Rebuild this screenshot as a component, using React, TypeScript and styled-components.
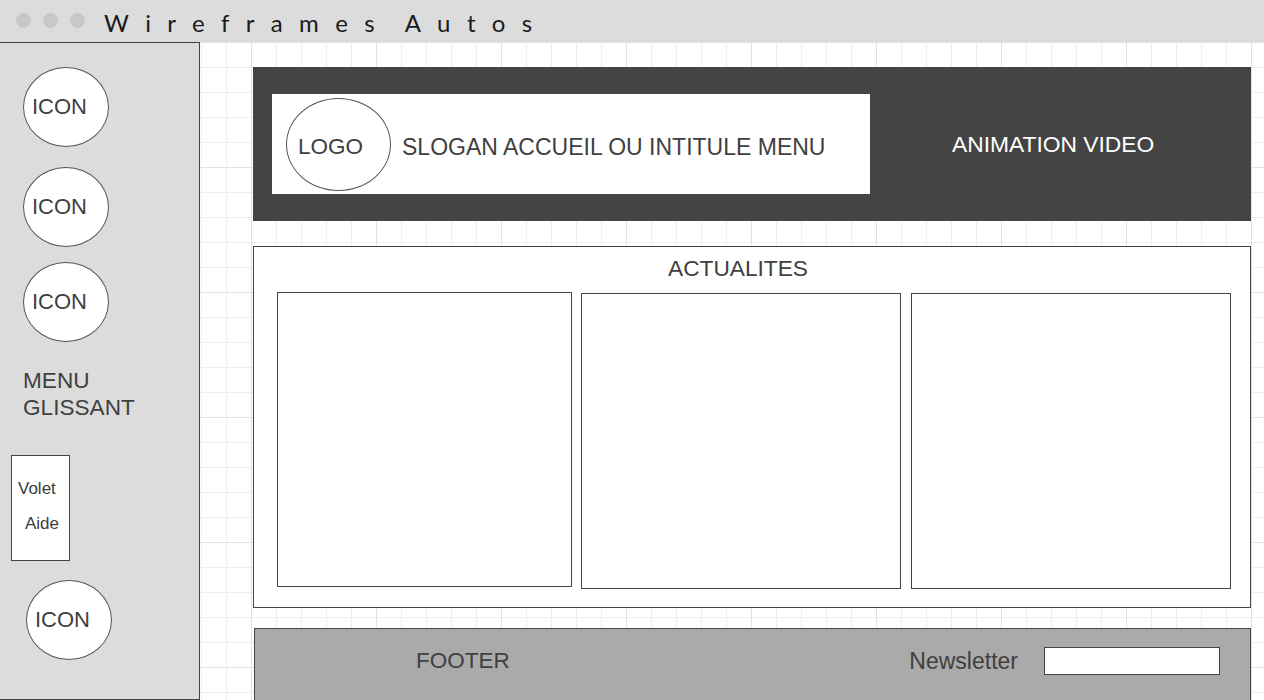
import styled, { createGlobalStyle } from "styled-components";

const GlobalStyle = createGlobalStyle`
  html, body {
    margin: 0;
    padding: 0;
    overflow: hidden;
    background: #ffffff;
  }
  body {
    font-family: "Liberation Sans", Arial, sans-serif;
    color: #404040;
  }
  * {
    box-sizing: border-box;
  }
`;

const Window = styled.div`
  width: 1264px;
  height: 700px;
  display: flex;
  flex-direction: column;
  overflow: hidden;
`;

const TitleBar = styled.div`
  height: 42px;
  flex: none;
  display: flex;
  align-items: center;
  background: #dcdcdc;
  padding-left: 16px;
`;

const Dots = styled.div`
  display: flex;
  gap: 12px;
  margin-top: -1px;
`;

const Dot = styled.span`
  width: 15px;
  height: 15px;
  border-radius: 50%;
  background: #c8c8c8;
`;

const Title = styled.h1`
  margin: 2px 0 0 19px;
  font-family: Lato, "DejaVu Sans", sans-serif;
  font-weight: 400;
  font-size: 24px;
  letter-spacing: 16.4px;
  word-spacing: -8px;
  color: #1a1a1a;
`;

const Body = styled.div`
  flex: 1;
  display: flex;
  min-height: 0;
`;

const Sidebar = styled.aside`
  width: 200px;
  flex: none;
  background: #dcdcdc;
  border-top: 1px solid #444;
  border-right: 1px solid #444;
  border-bottom: 1px solid #444;
  padding-left: 23px;
  display: flex;
  flex-direction: column;
  align-items: flex-start;
`;

const IconBubble = styled.div<{ $top: number; $left?: number }>`
  width: 86px;
  height: 80px;
  flex: none;
  margin-top: ${(p) => p.$top}px;
  margin-left: ${(p) => p.$left ?? 0}px;
  border: 1px solid #555;
  border-radius: 50%;
  background: #fff;
  display: flex;
  align-items: center;
  padding-left: 8px;
  font-size: 22px;
  color: #404040;
`;

const MenuLabel = styled.div`
  margin-top: 25px;
  font-size: 22.6px;
  line-height: 27px;
  color: #404040;
`;

const HelpPanel = styled.div`
  width: 59px;
  height: 106px;
  margin-top: 34px;
  margin-left: -12px;
  background: #fff;
  border: 1px solid #444;
  padding: 23px 0 0 6px;
  font-size: 17px;
  line-height: 20px;
  color: #3c3c3c;
`;

const HelpLine = styled.div<{ $indent?: number }>`
  padding-left: ${(p) => p.$indent ?? 0}px;
  & + & {
    margin-top: 15px;
  }
`;

const Canvas = styled.main`
  flex: 1;
  padding: 25px 13px 0 53px;
  display: flex;
  flex-direction: column;
  background-color: #fff;
  background-image: linear-gradient(to right, #e2e2e2 1px, transparent 1px),
    linear-gradient(to bottom, #e2e2e2 1px, transparent 1px),
    linear-gradient(to right, #eeeeee 1px, transparent 1px),
    linear-gradient(to bottom, #eeeeee 1px, transparent 1px);
  background-size: 125px 125px, 125px 125px, 25px 25px, 25px 25px;
  background-position: 51px 0, 0 0, 1px 0, 0 0;
`;

const Header = styled.header`
  height: 154px;
  flex: none;
  background: #444;
  display: flex;
  align-items: center;
  padding-left: 19px;
`;

const Brand = styled.div`
  width: 598px;
  height: 100px;
  background: #fff;
  display: flex;
  align-items: center;
  padding-left: 14px;
`;

const Logo = styled.div`
  width: 105px;
  height: 93px;
  border: 1px solid #555;
  border-radius: 50%;
  display: flex;
  align-items: center;
  padding: 5px 0 0 11px;
  font-size: 22.5px;
  color: #404040;
`;

const Slogan = styled.span`
  margin: 6px 0 0 11px;
  font-size: 23px;
  color: #404040;
`;

const VideoLabel = styled.span`
  padding-left: 82px;
  font-size: 22.8px;
  color: #fff;
`;

const News = styled.section`
  height: 362px;
  flex: none;
  margin-top: 25px;
  background: #fff;
  border: 1px solid #444;
  padding: 8px 0 0 23px;
`;

const NewsTitle = styled.h2`
  margin: 0;
  padding-right: 51px;
  text-align: center;
  font-weight: normal;
  font-size: 22.7px;
  line-height: 26px;
  color: #404040;
`;

const Cards = styled.div`
  display: flex;
  align-items: flex-start;
  margin-top: 11px;
`;

const Card = styled.div<{ $w: number; $gap: number; $h: number; $top: number }>`
  width: ${(p) => p.$w}px;
  height: ${(p) => p.$h}px;
  margin-left: ${(p) => p.$gap}px;
  margin-top: ${(p) => p.$top}px;
  border: 1px solid #444;
  background: #fff;
`;

const Footer = styled.footer`
  height: 90px;
  flex: none;
  margin: 20px 0 0 1px;
  background: #aaa;
  border: 1px solid #444;
  display: flex;
  align-items: flex-start;
  padding: 18px 30px 0 161px;
`;

const FooterLabel = styled.span`
  font-size: 22.5px;
  line-height: 28px;
  color: #404040;
`;

const Newsletter = styled.label`
  margin-left: auto;
  display: flex;
  align-items: center;
  gap: 26px;
  font-size: 23px;
  line-height: 28px;
  color: #404040;
`;

const EmailInput = styled.input`
  width: 176px;
  height: 28px;
  border: 1px solid #444;
  background: #fff;
  padding: 0 4px;
  outline: none;
  font: inherit;
  font-size: 14px;
`;

const cards = [
  { w: 295, gap: 0, h: 295, top: 0 },
  { w: 320, gap: 9, h: 296, top: 1 },
  { w: 320, gap: 10, h: 296, top: 1 },
];

export default function App() {
  return (
    <>
      <GlobalStyle />
      <Window>
        <TitleBar>
          <Dots>
            <Dot />
            <Dot />
            <Dot />
          </Dots>
          <Title>Wireframes Autos</Title>
        </TitleBar>
        <Body>
          <Sidebar>
            <IconBubble $top={24}>ICON</IconBubble>
            <IconBubble $top={20}>ICON</IconBubble>
            <IconBubble $top={15}>ICON</IconBubble>
            <MenuLabel>
              MENU
              <br />
              GLISSANT
            </MenuLabel>
            <HelpPanel>
              <HelpLine>Volet</HelpLine>
              <HelpLine $indent={7}>Aide</HelpLine>
            </HelpPanel>
            <IconBubble $top={19} $left={3}>
              ICON
            </IconBubble>
          </Sidebar>
          <Canvas>
            <Header>
              <Brand>
                <Logo>LOGO</Logo>
                <Slogan>SLOGAN ACCUEIL OU INTITULE MENU</Slogan>
              </Brand>
              <VideoLabel>ANIMATION VIDEO</VideoLabel>
            </Header>
            <News>
              <NewsTitle>ACTUALITES</NewsTitle>
              <Cards>
                {cards.map((c, i) => (
                  <Card key={i} $w={c.w} $gap={c.gap} $h={c.h} $top={c.top} />
                ))}
              </Cards>
            </News>
            <Footer>
              <FooterLabel>FOOTER</FooterLabel>
              <Newsletter>
                Newsletter
                <EmailInput type="text" />
              </Newsletter>
            </Footer>
          </Canvas>
        </Body>
      </Window>
    </>
  );
}
